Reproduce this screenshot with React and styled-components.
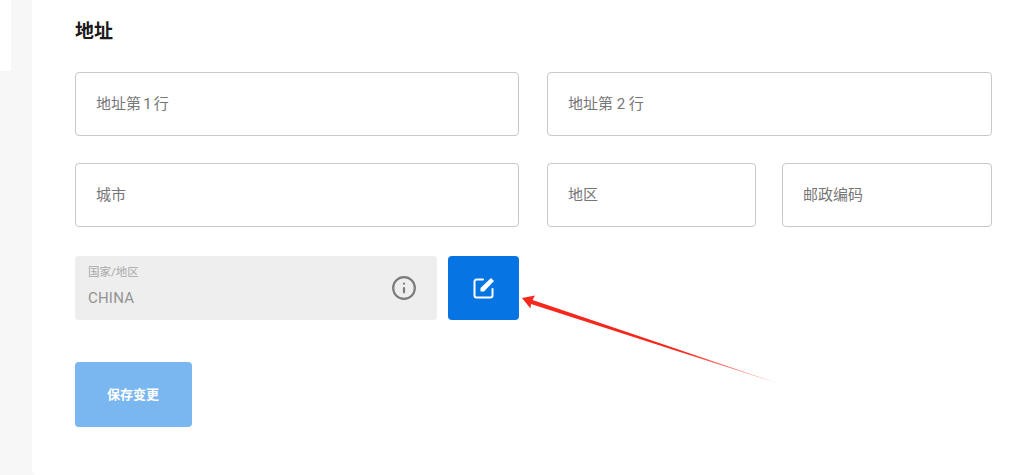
import React from 'react'
import styled, { createGlobalStyle } from 'styled-components'
import { Info } from 'lucide-react'

const GlobalStyle = createGlobalStyle`
  html, body {
    margin: 0;
    padding: 0;
    background: #f7f7f7;
    overflow: hidden;
  }
  * {
    box-sizing: border-box;
  }
`

const Page = styled.div`
  position: relative;
  display: flex;
  width: 1024px;
  height: 475px;
  overflow: hidden;
  font-family: Roboto, "Noto Sans CJK SC", sans-serif;
`

const Sidebar = styled.aside`
  flex: 0 0 32px;
  background: #f7f7f7;
`

const SidebarCard = styled.div`
  width: 11px;
  height: 71px;
  background: #fff;
`

const Main = styled.main`
  flex: 1;
  background: #fff;
  border-bottom-left-radius: 6px;
  padding: 19px 32px 0 43px;
`

const Title = styled.h2`
  margin: 0 0 28px;
  height: 25px;
  font-size: 19px;
  line-height: 25px;
  font-weight: 700;
  color: #1a1a1a;
`

const Row = styled.div`
  display: grid;
  grid-template-columns: 444px 445px;
  column-gap: 28px;
  margin-bottom: ${props => props.$gap}px;
`

const SplitCell = styled.div`
  display: grid;
  grid-template-columns: 209px 210px;
  column-gap: 26px;
`

const Field = styled.div`
  display: flex;
  align-items: center;
  height: 64px;
  padding: 0 0 3px 20px;
  background: #fff;
  border: 1px solid #c9c9c9;
  border-radius: 4px;
  font-size: 15px;
  word-spacing: ${props => props.$tight ? '-1.5px' : '0'};
  color: #767676;
`

const CountryRow = styled.div`
  display: flex;
  width: 444px;
  gap: 11px;
  margin-bottom: 42px;
`

const CountryField = styled.div`
  display: flex;
  align-items: center;
  justify-content: space-between;
  flex: 0 0 362px;
  height: 64px;
  padding: 0 20px 0 13px;
  background: #eeeeee;
  border-radius: 4px;
`

const CountryText = styled.div`
  display: flex;
  flex-direction: column;
  gap: 8px;
  padding-bottom: 4px;
`

const CountryLabel = styled.span`
  font-size: 11.5px;
  line-height: 16px;
  color: #a8a8a8;
`

const CountryValue = styled.span`
  font-size: 15px;
  line-height: 20px;
  letter-spacing: 0.2px;
  color: #939393;
`

const EditButton = styled.button`
  display: flex;
  align-items: center;
  justify-content: center;
  flex: 0 0 71px;
  height: 64px;
  padding: 0;
  border: 0;
  border-radius: 4px;
  background: #0774e3;
`

const SaveButton = styled.button`
  display: block;
  width: 117px;
  height: 65px;
  padding: 0 1px 3px 0;
  border: 0;
  border-radius: 4px;
  background: #7ab6f0;
  color: #fff;
  font-family: inherit;
  font-size: 13px;
  font-weight: 700;
`

const ArrowOverlay = styled.svg`
  position: absolute;
  left: 0;
  top: 0;
  pointer-events: none;
`

const EditIcon = () => (
  <svg width="22" height="22" viewBox="0 0 22 22" fill="none" stroke="#fff" strokeWidth="2" strokeLinecap="round" strokeLinejoin="round">
    <path d="M10 2.5H3.5a2 2 0 0 0-2 2V18.5a2 2 0 0 0 2 2H17.5a2 2 0 0 0 2-2V12" />
    <path d="M7.5 14.5V11L18 1l3 3-10 10.5z" fill="#fff" stroke="none" />
  </svg>
)

const Arrow = () => (
  <ArrowOverlay width="1024" height="475" viewBox="0 0 1024 475">
    <defs>
      <linearGradient id="arrowFade" gradientUnits="userSpaceOnUse" x1="522" y1="298" x2="783" y2="385">
        <stop offset="0" stopColor="#f4281c" />
        <stop offset="0.6" stopColor="#f4281c" />
        <stop offset="1" stopColor="#f4281c" stopOpacity="0.15" />
      </linearGradient>
    </defs>
    <path
      d="M522 298 L535 295.5 L532.5 300 L783 385 L531 304 L530.5 308.5 Z"
      fill="url(#arrowFade)"
    />
  </ArrowOverlay>
)

const App = () => {
  return (
    <Page>
      <GlobalStyle />
      <Sidebar>
        <SidebarCard />
      </Sidebar>
      <Main>
        <Title>地址</Title>
        <Row $gap={27}>
          <Field $tight>地址第 1 行</Field>
          <Field>地址第 2 行</Field>
        </Row>
        <Row $gap={29}>
          <Field>城市</Field>
          <SplitCell>
            <Field>地区</Field>
            <Field>邮政编码</Field>
          </SplitCell>
        </Row>
        <CountryRow>
          <CountryField>
            <CountryText>
              <CountryLabel>国家/地区</CountryLabel>
              <CountryValue>CHINA</CountryValue>
            </CountryText>
            <Info size={26} color="#7b7b7b" strokeWidth={2} />
          </CountryField>
          <EditButton>
            <EditIcon />
          </EditButton>
        </CountryRow>
        <SaveButton>保存变更</SaveButton>
      </Main>
      <Arrow />
    </Page>
  )
}

export default App
